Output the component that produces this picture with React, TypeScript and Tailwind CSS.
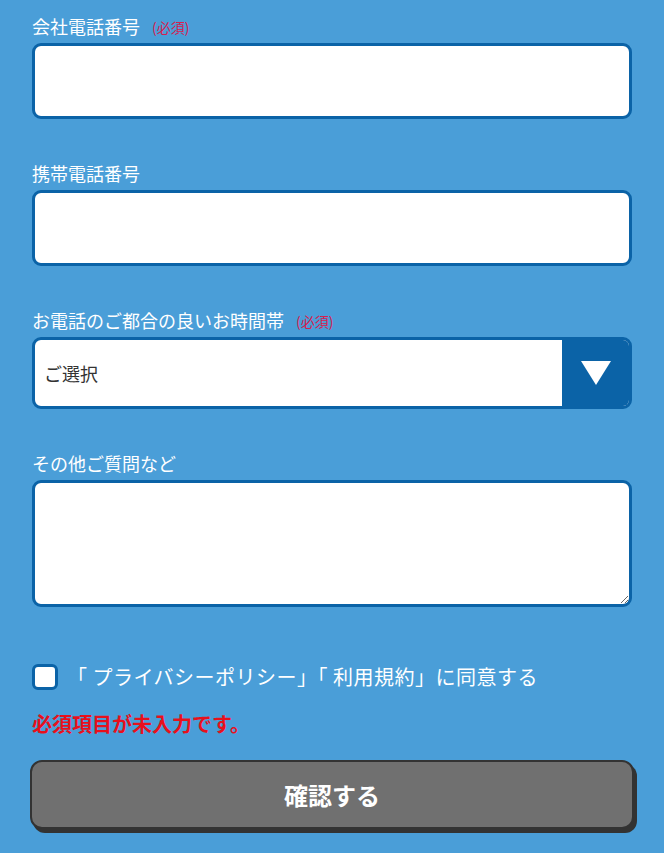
import React from "react";

const font = { fontFamily: '"Noto Sans CJK JP", "Noto Sans", sans-serif' };

function Label({ text, required }: { text: string; required?: boolean }) {
  return (
    <div className="flex items-center h-[24px] mb-[5px] text-[18px] leading-[24px] text-white">
      <span>{text}</span>
      {required && (
        <span className="ml-[12px] text-[14px] text-[#d6204f] leading-[24px] pt-[2px]">(必須)</span>
      )}
    </div>
  );
}

export default function App() {
  return (
    <div className="min-h-screen w-full bg-[#4a9ed8]" style={font}>
      <div className="px-[32px] pt-[14px] pb-[20px] flex flex-col">
        <div className="mb-[42px]">
          <Label text="会社電話番号" required />
          <input
            type="text"
            className="block w-full h-[76px] rounded-[9px] border-[3px] border-[#0b63a7] bg-white outline-none px-3"
          />
        </div>
        <div className="mb-[42px]">
          <Label text="携帯電話番号" />
          <input
            type="text"
            className="block w-full h-[76px] rounded-[9px] border-[3px] border-[#0b63a7] bg-white outline-none px-3"
          />
        </div>
        <div className="mb-[42px]">
          <Label text="お電話のご都合の良いお時間帯" required />
          <div className="flex h-[72px] rounded-[9px] border-[3px] border-[#0b63a7] bg-white overflow-hidden">
            <div className="flex-1 flex items-center pl-[9px] text-[18px] text-[#333333]">ご選択</div>
            <div className="w-[67px] bg-[#0b63a7] flex items-center justify-center">
              <svg width="30" height="24" viewBox="0 0 30 24">
                <polygon points="0,0 30,0 15,24" fill="#ffffff" />
              </svg>
            </div>
          </div>
        </div>
        <div>
          <Label text="その他ご質問など" />
          <textarea className="block w-full h-[127px] rounded-[9px] border-[3px] border-[#0b63a7] bg-white outline-none px-3 py-2 resize-y" />
        </div>
        <div className="flex items-center mt-[57px] h-[26px]">
          <div className="w-[26px] h-[26px] rounded-[6px] border-[3px] border-[#0b63a7] bg-white shrink-0" />
          <span className="ml-[9px] text-[20px] leading-[26px] tracking-[0.5px] text-white whitespace-nowrap">
            「 プライバシーポリシー」「 利用規約」に同意する
          </span>
        </div>
        <div className="mt-[21px] text-[20px] leading-[26px] font-bold text-[#e8101c]">必須項目が未入力です。</div>
        <button className="mt-[23px] -mx-[2px] h-[69px] rounded-[12px] border-2 border-[#333333] bg-[#707070] shadow-[3px_4px_0_#333333] text-white text-[24px] font-bold flex items-center justify-center">
          確認する
        </button>
      </div>
    </div>
  );
}
